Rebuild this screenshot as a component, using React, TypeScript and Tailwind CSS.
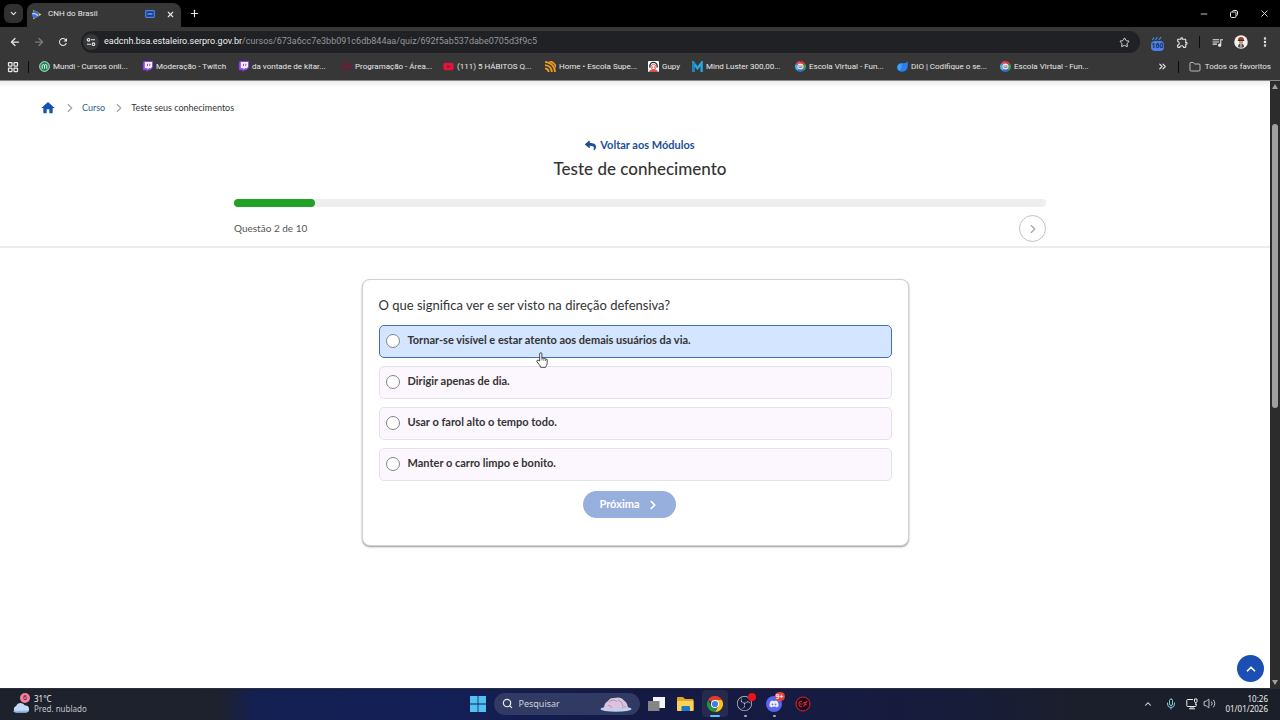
import React, { useState } from 'react';
import {
  ArrowLeft,
  ArrowRight,
  ChevronDown,
  ChevronRight,
  ChevronUp,
  ChevronsRight,
  EllipsisVertical,
  Folder,
  LayoutGrid,
  Mic,
  Minus,
  Plus,
  Search,
  Star,
  Volume2,
  X,
} from 'lucide-react';
import { FaDiscord, FaReply, FaYoutube } from 'react-icons/fa';
import { MdHome, MdOutlineExtension, MdOutlineQueueMusic, MdRefresh } from 'react-icons/md';
import { SiObsstudio } from 'react-icons/si';

const TwitchIcon = () => (
  <svg viewBox="0 0 12 12" className="h-[11px] w-[11px] shrink-0">
    <path d="M2 0h10v7l-3 3H7L5 12V10H1V2z" fill="#8b3fe8" />
    <path d="M3 1h8v5.500L9.500 8H7.500L6 9.500V8H3z" fill="#f4eeff" />
    <path d="M6 3v2.500M8.500 3v2.500" stroke="#8b3fe8" strokeWidth="1" />
  </svg>
);

const MundiIcon = () => (
  <svg viewBox="0 0 12 12" className="h-[11px] w-[11px] shrink-0">
    <circle cx="6" cy="6" r="5.300" fill="#12884f" stroke="#d5f3e3" strokeWidth="1" />
    <path d="M3.500 8.500V5q0-1 1.200-1T6 5v3.500M6 5q0-1 1.300-1T8.500 5v3.500" fill="none" stroke="#fff" strokeWidth="1" />
  </svg>
);

const CodeIcon = () => (
  <svg viewBox="0 0 12 12" className="h-[11px] w-[11px] shrink-0">
    <path d="M4.500 2 6 .8 7.500 2M2.500 4 .8 6l1.700 2M9.500 4l1.700 2-1.700 2M4.500 10 6 11.200 7.500 10M4 4.500 8 7.500M8 4 4 8" fill="none" stroke="#8c1237" strokeWidth="1.300" />
  </svg>
);

const WavesIcon = () => (
  <svg viewBox="0 0 12 12" className="h-[11px] w-[11px] shrink-0">
    <path d="M0 1q10 1 11 11M0 4.500q7 .5 7.500 7.500M0 8q4 .5 4 4M5 0q6 2 7 7" fill="none" stroke="#f09a1c" strokeWidth="2" />
  </svg>
);

const GupyIcon = () => (
  <svg viewBox="0 0 12 12" className="h-[11px] w-[11px] shrink-0">
    <rect width="12" height="12" rx="1" fill="#fff" />
    <path d="M2 7V5.500a4 4 0 0 1 8 0V7" fill="none" stroke="#262626" strokeWidth="1.500" />
    <circle cx="6" cy="6.500" r="2.800" fill="#fff" stroke="#de4a4a" />
    <path d="M1 12q1-3 5-3t5 3z" fill="#de4a4a" />
    <path d="M5 6v1.500M7 6v1.500" stroke="#de4a4a" />
  </svg>
);

const MindIcon = () => (
  <svg viewBox="0 0 12 12" className="h-[11px] w-[11px] shrink-0">
    <path d="M1.500 12V2L6 8l4.500-6v10" fill="none" stroke="#24a8dc" strokeWidth="2.600" />
    <path d="M1.500 12V2" stroke="#1b86c4" strokeWidth="2.600" />
  </svg>
);

const EscolaIcon = () => (
  <svg viewBox="0 0 12 12" className="h-[11px] w-[11px] shrink-0">
    <g fill="none" strokeWidth="3">
      <path d="M2.100 4A4.400 4.400 0 0 1 6 1.600" stroke="#e0457b" />
      <path d="M6 1.600A4.400 4.400 0 0 1 9.900 4" stroke="#d93a2f" />
      <path d="M9.900 4A4.400 4.400 0 0 1 8.500 9.600" stroke="#36a35a" />
      <path d="M8.500 9.600A4.400 4.400 0 0 1 3.500 9.600" stroke="#3769d6" />
      <path d="M3.500 9.600A4.400 4.400 0 0 1 2.100 4" stroke="#3fb6d6" />
    </g>
    <circle cx="6" cy="6" r="3.300" fill="#f3f3f8" />
    <path d="M3.500 5.500h5M4 7.200h4" stroke="#9b4f78" strokeWidth=".9" />
  </svg>
);

const DioIcon = () => (
  <svg viewBox="0 0 12 12" className="h-[11px] w-[11px] shrink-0">
    <path d="M11.500.5q1 6-1.200 9T4 11.500Q0 10.500.3 6.500T5 2.500Q9 3 11.500.5z" fill="#2f7df2" />
    <path d="M.3 6.500Q1 3 5 2.500q1 4-2 8.500Q0 9.500.3 6.500z" fill="#3ba4f7" />
  </svg>
);

const BrasilIcon = () => (
  <svg viewBox="0 0 12 12" className="h-[11px] w-[11px] shrink-0">
    <path d="M2 .8 11.500 6 2 11.500 4 6z" fill="#f3d21f" />
    <path d="M3 1 8 3.500 4 5z" fill="#2aa04a" />
    <circle cx="4.800" cy="6" r="3.800" fill="#3f6fdc" />
    <path d="M1.500 5q3-.5 6.200 2.200" fill="none" stroke="#fff" strokeWidth="1" />
  </svg>
);

const ChromeIcon = () => (
  <svg viewBox="0 0 48 48" className="h-4 w-4">
    <path d="M24 24 3.200 12A24 24 0 0 1 44.800 12z" fill="#e33b2e" />
    <path d="M24 12h20.800A24 24 0 0 1 24 48l10.400-18z" fill="#fbc116" />
    <path d="M3.200 12 13.600 30 24 36l6.500.5L24 48A24 24 0 0 1 3.200 12z" fill="#229342" />
    <circle cx="24" cy="24" r="12" fill="#fff" />
    <circle cx="24" cy="24" r="9.300" fill="#3f7de8" />
  </svg>
);

const bookmarks = [
  { label: 'Mundi - Cursos onli...', icon: <MundiIcon />, width: 'w-[103px]' },
  { label: 'Moderação - Twitch', icon: <TwitchIcon />, width: 'w-24' },
  { label: 'da vontade de kitar...', icon: <TwitchIcon />, width: 'w-[103px]' },
  { label: 'Programação - Área...', icon: <CodeIcon />, width: 'w-[102px]' },
  { label: '(111) 5 HÁBITOS Q...', icon: <FaYoutube className="h-[11px] w-[11px] shrink-0 text-[#e8113c]" />, width: 'w-[102px]' },
  { label: 'Home • Escola Supe...', icon: <WavesIcon />, width: 'w-[103px]' },
  { label: 'Gupy', icon: <GupyIcon />, width: 'w-11' },
  { label: 'Mind Luster 300,00...', icon: <MindIcon />, width: 'w-[103px]' },
  { label: 'Escola Virtual - Fun...', icon: <EscolaIcon />, width: 'w-[102px]' },
  { label: 'DIO | Codifique o se...', icon: <DioIcon />, width: 'w-[103px]' },
  { label: 'Escola Virtual - Fun...', icon: <EscolaIcon />, width: 'w-[103px]' },
];

const answers = [
  'Tornar-se visível e estar atento aos demais usuários da via.',
  'Dirigir apenas de dia.',
  'Usar o farol alto o tempo todo.',
  'Manter o carro limpo e bonito.',
];

const TabStrip: React.FC = () => (
  <div className="flex h-[27px] items-end bg-black">
    <button aria-label="Pesquisar guias" className="mb-1 ml-1 flex h-[19px] w-[19px] items-center justify-center rounded-md bg-[#303030]">
      <ChevronDown size={9} strokeWidth={3} />
    </button>
    <div className="ml-1 flex h-6 w-[154px] items-center rounded-t-lg bg-[#373737] px-1 pb-[2px]">
      <BrasilIcon />
      <span className="ml-[6px] flex-1 whitespace-nowrap">CNH do Brasil</span>
      <svg viewBox="0 0 10 8" className="mr-[11px] h-2 w-[10px]">
        <rect x=".7" y=".7" width="8.600" height="6.600" rx=".8" fill="#1c3a78" stroke="#4a86f0" strokeWidth="1.200" />
        <path d="M2.500 3h5v2h-5z" fill="#4a86f0" />
      </svg>
      <button aria-label="Fechar guia" className="mr-[2px]"><X size={9} strokeWidth={3} /></button>
    </div>
    <button aria-label="Nova guia" className="mb-2 ml-2"><Plus size={11} strokeWidth={2.5} /></button>
    <div className="ml-auto flex h-[27px] items-center gap-5 pr-[10px]">
      <button aria-label="Minimizar"><Minus size={10} strokeWidth={2} /></button>
      <button aria-label="Restaurar">
        <svg viewBox="0 0 10 10" className="h-[10px] w-[10px]" fill="none" stroke="currentColor">
          <rect x="1.500" y="3" width="5.500" height="5.500" rx="1.200" />
          <path d="M3.500 3V2.500q0-1 1-1h2.500q1.500 0 1.500 1.500v2.500q0 1-1 1" />
        </svg>
      </button>
      <button aria-label="Fechar"><X size={11} strokeWidth={2} /></button>
    </div>
  </div>
);

const Toolbar: React.FC = () => (
  <div className="flex h-[30px] items-center bg-[#373737] px-[9px]">
    <button aria-label="Voltar"><ArrowLeft size={12} strokeWidth={2.5} /></button>
    <button aria-label="Avançar" className="ml-3 text-[#7d7d7d]"><ArrowRight size={12} strokeWidth={2.5} /></button>
    <button aria-label="Recarregar" className="ml-3"><MdRefresh size={12} /></button>
    <div className="ml-3 flex h-[22px] flex-1 items-center rounded-full bg-[#202124] pl-[2px] pr-[10px]">
      <span className="flex h-4 w-4 items-center justify-center rounded-full bg-[#363739]">
        <svg viewBox="0 0 10 10" className="h-[10px] w-[10px]" fill="none" stroke="currentColor" strokeWidth="1.100">
          <circle cx="2.500" cy="2.800" r="1.300" />
          <path d="M5 2.800h4M1 7.200h4" />
          <circle cx="7.500" cy="7.200" r="1.300" />
        </svg>
      </span>
      <div className="ml-[5px] flex-1 whitespace-nowrap text-[9px] text-[#96989b]">
        <span className="text-[#efefef]">eadcnh.bsa.estaleiro.serpro.gov.br</span>/cursos/673a6cc7e3bb091c6db844aa/quiz/692f5ab537dabe0705d3f9c5
      </div>
      <button aria-label="Adicionar aos favoritos"><Star size={11} strokeWidth={2} /></button>
    </div>
    <div className="ml-[11px] flex h-[17px] w-[13px] flex-col items-center">
      <svg viewBox="0 0 13 5" className="mt-[2px] h-[5px] w-[13px]">
        <path d="M1.500 4 3 1.500M4.500 4 6.500 1M8 4l2-3" stroke="#3f8df0" strokeWidth="1.200" />
      </svg>
      <span className="h-[10px] w-[13px] rounded-sm bg-[#4a80e8] text-center text-[7px] leading-[10px] font-bold text-[#17305f]">160</span>
    </div>
    <button aria-label="Extensões" className="ml-3"><MdOutlineExtension size={13} /></button>
    <span className="ml-[10px] h-3 w-px bg-[#0c0c0c]" />
    <button aria-label="Controle de mídia" className="ml-[11px]"><MdOutlineQueueMusic size={13} /></button>
    <button aria-label="Perfil" className="ml-[10px]">
      <svg viewBox="0 0 14 14" className="h-[14px] w-[14px]">
        <circle cx="7" cy="7" r="6.800" fill="#f3f1ee" />
        <path d="M4 5q0-3 3-3t3 3z" fill="#9f3a30" />
        <path d="M3.800 5h6.400v1H3.800z" fill="#333" />
        <path d="M5 6h4v2.500H5z" fill="#c99a80" />
        <path d="M4 12q0-3.500 3-3.500T10 12q-3 1.500-6 0z" fill="#4b4543" />
        <path d="M7 8.500v4" stroke="#eee" />
      </svg>
    </button>
    <button aria-label="Menu" className="ml-[11px]"><EllipsisVertical size={12} strokeWidth={3} /></button>
  </div>
);

const BookmarksBar: React.FC = () => (
  <nav className="flex h-6 items-center border-b border-[#8a8a8a] bg-[#373737] pb-1 pl-[7px] pr-[9px]">
    <LayoutGrid size={12} strokeWidth={2.5} />
    <span className="ml-[9px] h-3 w-px bg-[#0c0c0c]" />
    <div className="ml-[10px] flex flex-1">
      {bookmarks.map((b, i) => (
        <a key={i} href="#" className={`flex shrink-0 items-center gap-[3px] whitespace-nowrap ${b.width}`}>
          {b.icon}
          {b.label}
        </a>
      ))}
    </div>
    <button aria-label="Mais favoritos"><ChevronsRight size={11} strokeWidth={2.5} /></button>
    <span className="ml-[10px] h-3 w-px bg-[#0c0c0c]" />
    <a href="#" className="ml-[10px] flex items-center gap-1 whitespace-nowrap">
      <Folder size={12} strokeWidth={1.5} />
      Todos os favoritos
    </a>
  </nav>
);

const Breadcrumb: React.FC = () => (
  <nav className="flex h-[54px] items-center pl-10 text-[9px] text-[#333]">
    <a href="#" aria-label="Início" className="text-[#1351b4]"><MdHome size={16} /></a>
    <ChevronRight size={14} strokeWidth={2} className="ml-[7px] text-[#a5a5a5]" />
    <a href="#" className="ml-[5px] text-[#2b5f94]">Curso</a>
    <ChevronRight size={14} strokeWidth={2} className="ml-[7px] text-[#a5a5a5]" />
    <span className="ml-[5px]">Teste seus conhecimentos</span>
  </nav>
);

const HandCursor = () => (
  <svg viewBox="0 0 12 16" className="pointer-events-none absolute top-[26px] left-[156px] z-10 h-4 w-3">
    <path
      d="M3.700 9V1.900a1.100 1.100 0 0 1 2.200 0v4.300q1.200-.8 1.900.3 1.200-.6 1.700.5 1.600-.4 1.700 1v2.700q0 1.600-.7 2.700t-.8 1.900H4.600q-.3-1.500-1.400-2.700L1 9.800q-.6-1 .2-1.500.8-.4 1.600.2z"
      fill="#fff"
      stroke="#333"
      strokeWidth=".9"
    />
    <path d="M5.900 6v2.500M7.800 6.500v2.300M9.500 7v2" stroke="#555" strokeWidth=".7" />
  </svg>
);

const Quiz: React.FC = () => {
  const [selected, setSelected] = useState<number | null>(null);

  return (
    <form className="mx-auto mt-[31px] mb-6 w-full max-w-[547px] rounded-lg border border-[#d2d2d2] bg-white px-4 pt-4 pb-[27px] shadow-[0_1px_2px_rgba(0,0,0,0.4)]">
      <fieldset className="flex flex-col gap-2">
        <legend className="mb-[11px] text-[13px] leading-[18px]">O que significa ver e ser visto na direção defensiva?</legend>
        {answers.map((answer, i) => (
          <label
            key={answer}
            className={`relative flex h-[33px] items-center gap-2 rounded-[5px] border px-[6px] pb-[2px] text-[11px] font-bold ${
              i === 0 ? 'border-[#4470b0] bg-[#d4e5ff]' : 'border-[#e6e0e8] bg-[#fcf6fe]'
            }`}
          >
            <input
              type="radio"
              name="resposta"
              checked={selected === i}
              onChange={() => setSelected(i)}
              className="h-[14px] w-[14px] appearance-none rounded-full border border-[#858585] bg-white checked:border-4 checked:border-[#1351b4]"
            />
            {answer}
            {i === 0 && <HandCursor />}
          </label>
        ))}
      </fieldset>
      <div className="mt-[10px] flex justify-center pr-[11px]">
        <button type="submit" disabled className="flex h-[27px] items-center gap-[6px] rounded-full bg-[#97afdc] px-4 text-[11px] font-bold text-white">
          Próxima
          <ChevronRight size={14} strokeWidth={3} />
        </button>
      </div>
    </form>
  );
};

const Scrollbar: React.FC = () => (
  <div className="flex w-[10px] shrink-0 flex-col items-center bg-[#2c2c2c] py-[3px]">
    <svg viewBox="0 0 6 5" className="h-[5px] w-[6px]"><path d="M3 0 6 5H0z" fill="#a0a0a0" /></svg>
    <div className="flex w-[6px] flex-1 flex-col pt-[35px]">
      <div className="h-[51%] rounded-full bg-[#9f9f9f]" />
    </div>
    <svg viewBox="0 0 6 5" className="h-[5px] w-[6px]"><path d="M3 5 6 0H0z" fill="#a0a0a0" /></svg>
  </div>
);

const Taskbar: React.FC = () => (
  <footer className="grid h-8 grid-cols-[1fr_auto_1fr] items-center border-t border-[#2b2d38] bg-[linear-gradient(90deg,#1d212b_0%,#1d222c_17%,#141f52_20%,#131f57_35%,#151a45_50%,#161b42_65%,#171c3a_75%,#1b1f2c_84%,#1b1f2a_100%)] pb-[2px] text-[8px] leading-[10px] text-[#ededed]">
    <div className="flex items-center gap-1 pl-3">
      <span className="relative h-[22px] w-[18px]">
        <svg viewBox="0 0 18 12" className="absolute bottom-[2px] left-0 h-3 w-[18px]">
          <path d="M4 11.500a3.500 3.500 0 0 1 0-6.500A5 5 0 0 1 13 4.500a3.500 3.500 0 0 1 1 7z" fill="#c4d9f8" />
          <path d="M1 10q1 1.500 3 1.500h10q2.500 0 3-2z" fill="#8fb5ec" />
        </svg>
        <span className="absolute top-0 right-0 h-[10px] w-[10px] rounded-full bg-[#f0829b] text-center text-[7px] text-[#3b1420]">6</span>
      </span>
      <div>
        <div>31°C</div>
        <div className="text-[#c5c5c8]">Pred. nublado</div>
      </div>
    </div>

    <div className="flex items-center">
      <button aria-label="Iniciar">
        <svg viewBox="0 0 16 16" className="h-4 w-4">
          <path d="M0 0h7.600v7.600H0zM8.400 0H16v7.600H8.400zM0 8.400h7.600V16H0zM8.400 8.400H16V16H8.400z" fill="#53c1f3" />
        </svg>
      </button>
      <label className="ml-2 flex h-[22px] w-[146px] items-center rounded-full bg-[#313a62] px-2">
        <Search size={11} strokeWidth={2.5} />
        <input aria-label="Pesquisar" placeholder="Pesquisar" className="ml-[6px] w-20 min-w-0 flex-1 bg-transparent text-[9px] placeholder:text-[#cfd2de]" />
        <svg viewBox="0 0 32 16" className="h-4 w-8">
          <ellipse cx="16" cy="13" rx="15.500" ry="2.800" fill="#b6d6f5" />
          <path d="M4 12Q4 7 8 5q2-3.500 6-3 7-2 10 2.500 3.500 2 4 7.500-3 2.500-7 1.500-4-2-6 .5Q9 15.500 4 12z" fill="#dcc3df" />
          <path d="M9 6q4-3.500 8-.5M18 4q4 1 5 6M8 9q3 1 4 3M22 12q2-2 4-1" fill="none" stroke="#a688b0" strokeWidth=".8" />
        </svg>
      </label>
      <button aria-label="Visão de tarefas" className="ml-2">
        <svg viewBox="0 0 17 16" className="h-4 w-[17px]">
          <path d="M5 1h12v11H5z" fill="#f4f4f4" />
          <path d="M0 5h11.500v10H0z" fill="#858585" />
        </svg>
      </button>
      <button aria-label="Explorador de arquivos" className="ml-3">
        <svg viewBox="0 0 17 16" className="h-4 w-[17px]">
          <path d="M0 2q0-1 1-1h5l2 2h7.500q1 0 1 1v10q0 1-1 1H1q-1 0-1-1z" fill="#e2a526" />
          <path d="M0 5h16.500v9q0 1-1 1H1q-1 0-1-1z" fill="#f9d25b" />
          <path d="M4.500 15v-4q0-1 1-1H12q1 0 1 1v4z" fill="#1979c4" />
        </svg>
      </button>
      <button aria-label="Google Chrome" className="relative ml-2 flex h-[27px] w-[26px] items-center justify-center rounded bg-[#262b4b]">
        <ChromeIcon />
        <span className="absolute bottom-0 left-2 h-[2px] w-[10px] rounded-full bg-[#5ac4ee]" />
      </button>
      <button aria-label="OBS Studio" className="relative ml-2 flex h-[27px] w-[18px] items-center justify-center">
        <SiObsstudio size={15} className="text-[#c9c9c9]" />
        <span className="absolute top-[3px] -right-[2px] h-2 w-2 rounded-full bg-[#ee1212]" />
        <span className="absolute bottom-0 left-2 h-[2px] w-[3px] rounded-full bg-[#a9abb8]" />
      </button>
      <button aria-label="Discord" className="relative ml-3 flex h-[27px] w-[17px] items-center justify-center">
        <span className="flex h-4 w-4 items-center justify-center rounded-full bg-[#5865f2]"><FaDiscord size={10} /></span>
        <span className="absolute top-[2px] -right-[2px] h-[9px] w-[10px] rounded-full bg-[#e2413f] text-center text-[7px] leading-[9px] font-bold">9+</span>
        <span className="absolute bottom-0 left-[7px] h-[2px] w-[3px] rounded-full bg-[#a9abb8]" />
      </button>
      <button aria-label="Captura" className="ml-3">
        <svg viewBox="0 0 16 16" className="h-4 w-4" fill="none" stroke="#e0222c">
          <circle cx="8" cy="8" r="7" fill="#170d1c" strokeWidth="1" />
          <path d="M7 5.500Q4 5 4 8t3 2.500M5 8h2.500M8.500 10.500 12 5M9 6l2.500 3.500M8 7l4-1" strokeWidth="1.200" />
        </svg>
      </button>
    </div>

    <div className="flex items-center justify-end pr-3">
      <ChevronUp size={10} strokeWidth={2.5} />
      <Mic size={12} strokeWidth={2} className="ml-3 text-[#7ed0d6]" />
      <svg viewBox="0 0 12 12" className="ml-[9px] h-3 w-3" fill="none" stroke="currentColor">
        <path d="M7 1.500H1.500Q.8 1.500.8 2.200v5.600q0 .7.700.7h8q.7 0 .7-.7V6M3 10.800h6M5 8.500v2M7 8.500v2" />
        <path d="M8.500 1h2.500v2.500q0 1-1.200 1t-1.300-1zM9.800 4.500V7" />
      </svg>
      <Volume2 size={13} strokeWidth={1.5} className="ml-[5px]" />
      <div className="ml-[9px] text-right">
        <div>10:26</div>
        <div>01/01/2026</div>
      </div>
    </div>
  </footer>
);

const App: React.FC = () => {
  return (
    <div className="flex min-h-screen flex-col bg-white font-['Noto_Sans','Open_Sans',sans-serif]">
      <header className="font-['Roboto',sans-serif] text-[8px] text-[#e8e8e8]">
        <TabStrip />
        <Toolbar />
        <BookmarksBar />
      </header>

      <div className="flex flex-1 font-['Lato',sans-serif] text-[#333]">
        <main className="relative min-w-0 flex-1 bg-[linear-gradient(180deg,#ececec_0px,#ffffff_6px)]">
          <Breadcrumb />

          {/* Quiz header */}
          <section className="border-b-2 border-[#ededed] pb-1 pl-[10px]">
            <div className="mx-auto flex max-w-[812px] flex-col">
              <a href="#" className="mt-[2px] flex items-center justify-center gap-1 text-[11px] leading-4 font-bold text-[#1b4f9c]">
                <FaReply size={11} />
                Voltar aos Módulos
              </a>
              <h1 className="mt-1 text-center text-[17px] leading-6 font-medium">Teste de conhecimento</h1>
              <div className="mt-[18px] h-2 rounded-full bg-[#eeeeee]">
                <div className="h-2 w-1/10 rounded-full bg-[#23a127]" />
              </div>
              <div className="mt-2 flex items-center justify-between">
                <span className="text-[10px] text-[#555]">Questão 2 de 10</span>
                <button aria-label="Próxima questão" className="flex h-[27px] w-[27px] items-center justify-center rounded-full border border-[#bfc1c8] text-[#a2a5b2]">
                  <ChevronRight size={14} strokeWidth={2} />
                </button>
              </div>
            </div>
          </section>

          <Quiz />

          <button aria-label="Voltar ao topo" className="absolute right-[6px] bottom-[6px] flex h-[27px] w-[27px] items-center justify-center rounded-full bg-[#1b4fb3] text-white">
            <ChevronUp size={14} strokeWidth={3} />
          </button>
        </main>
        <Scrollbar />
      </div>

      <Taskbar />
    </div>
  );
};

export default App;
